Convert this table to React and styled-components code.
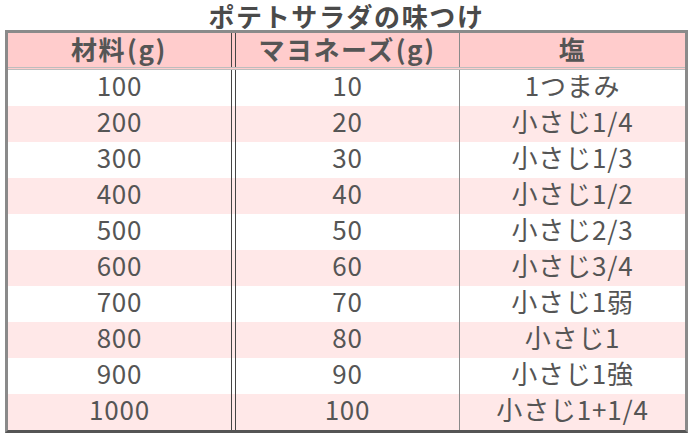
import React from "react";
import styled, { createGlobalStyle } from "styled-components";

const GlobalStyle = createGlobalStyle`
  html, body { margin: 0; padding: 0; background: #ffffff; }
  body { font-family: "Noto Sans CJK JP", "Noto Sans", sans-serif; }
  * { box-sizing: border-box; }
`;

const Page = styled.div`
  width: 694px;
  height: 438px;
  display: flex;
  flex-direction: column;
  padding-left: 5px;
`;

const Title = styled.h1`
  margin: 0;
  height: 30px;
  width: 683px;
  display: flex;
  align-items: center;
  justify-content: center;
  padding-top: 2px;
  font-size: 26px;
  line-height: 28px;
  font-weight: 700;
  color: #4a4a4a;
  letter-spacing: 1.6px;
`;

const Table = styled.div`
  width: 683px;
  border: 3px solid #8a8a8a;
  border-bottom-color: #555555;
  display: flex;
  flex-direction: column;
`;

const Row = styled.div`
  display: flex;
  height: ${(p) => (p.$head ? "37px" : "36px")};
  background: ${(p) => (p.$head ? "#ffcccc" : p.$alt ? "#ffe8e8" : "#ffffff")};
  border-bottom: ${(p) => (p.$head ? "3px double #bdbdbd" : "none")};
`;

const Cell = styled.div`
  display: flex;
  align-items: center;
  justify-content: center;
  color: #555555;
  font-size: ${(p) => (p.$head ? "26px" : "26px")};
  line-height: 30px;
  font-weight: ${(p) => (p.$head ? 700 : 400)};
  letter-spacing: ${(p) => (p.$head ? "1.5px" : "0.8px")};
  white-space: nowrap;
  padding-bottom: ${(p) => (p.$head ? "3px" : "6px")};
  ${(p) =>
    p.$col === 0 &&
    `
    width: 224px;
    border-right: 1px solid #454545;
  `}
  ${(p) =>
    p.$col === 1 &&
    `
    width: 225px;
    margin-left: 3px;
    border-left: 1px solid #454545;
    border-right: 1px solid #8a8a8a;
  `}
  ${(p) =>
    p.$col === 2 &&
    `
    width: 225px;
  `}
`;

const Paren = styled.span`
  margin: 0 1px;
`;

const rows = [
  ["100", "10", "1つまみ"],
  ["200", "20", "小さじ1/4"],
  ["300", "30", "小さじ1/3"],
  ["400", "40", "小さじ1/2"],
  ["500", "50", "小さじ2/3"],
  ["600", "60", "小さじ3/4"],
  ["700", "70", "小さじ1弱"],
  ["800", "80", "小さじ1"],
  ["900", "90", "小さじ1強"],
  ["1000", "100", "小さじ1+1/4"],
];

export default function App() {
  return (
    <>
      <GlobalStyle />
      <Page>
        <Title>ポテトサラダの味つけ</Title>
        <Table>
          <Row $head>
            <Cell $head $col={0}>
              材料<Paren>(g)</Paren>
            </Cell>
            <Cell $head $col={1}>
              マヨネーズ<Paren>(g)</Paren>
            </Cell>
            <Cell $head $col={2}>塩</Cell>
          </Row>
          {rows.map((r, i) => (
            <Row key={i} $alt={i % 2 === 1}>
              {r.map((v, j) => (
                <Cell key={j} $col={j}>
                  {v}
                </Cell>
              ))}
            </Row>
          ))}
        </Table>
      </Page>
    </>
  );
}
